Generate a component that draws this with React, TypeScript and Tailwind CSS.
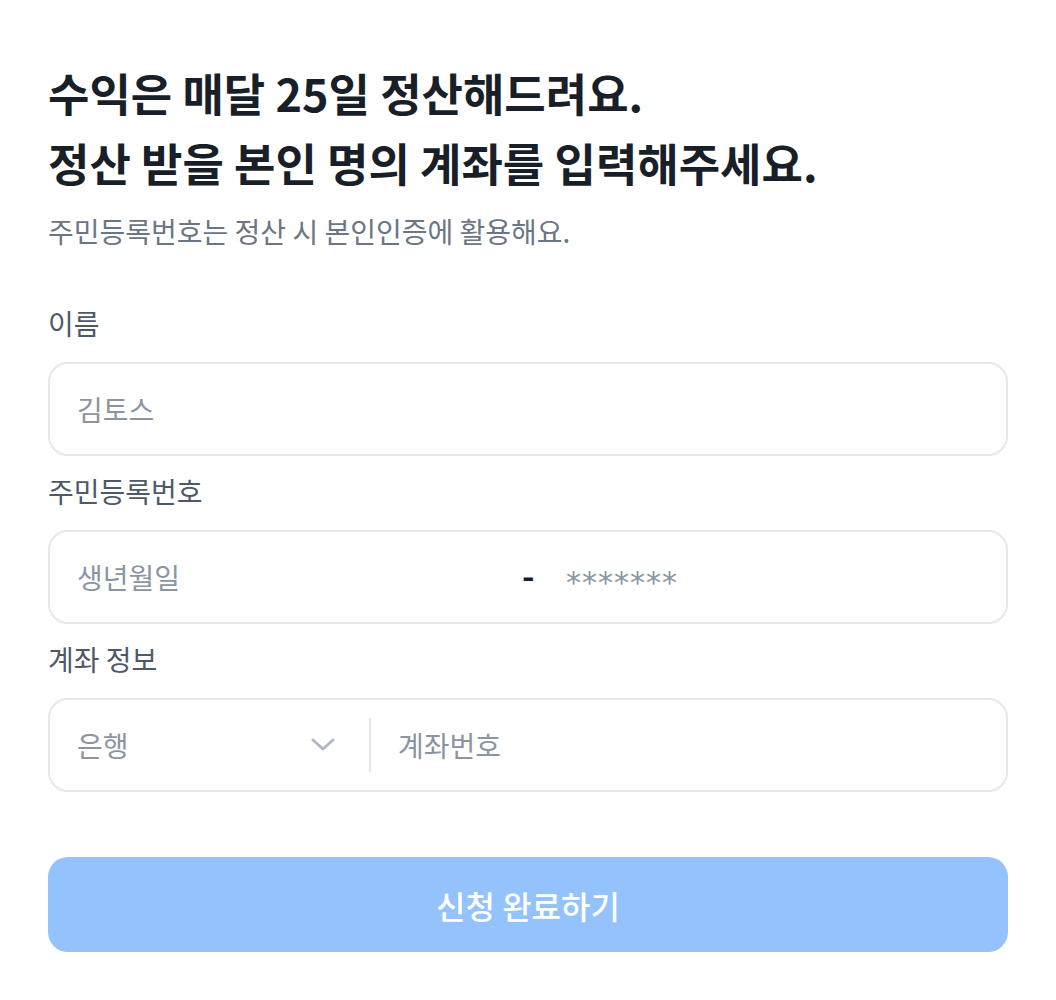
import { useState } from "react";

const font = { fontFamily: '"Noto Sans CJK KR", "Noto Sans", sans-serif' };

function Label({ children }: { children: React.ReactNode }) {
  return <div className="text-[28px] leading-[36px] text-[#4e5968] mb-[21px]">{children}</div>;
}

export default function App() {
  const [name, setName] = useState("");
  const [birth, setBirth] = useState("");
  const [rest, setRest] = useState("");
  const [account, setAccount] = useState("");

  return (
    <div className="min-h-screen bg-white" style={font}>
      <div className="px-[48px] pt-[58px] pb-[48px]">
        <h1 className="text-[45px] leading-[70px] font-semibold text-[#191f28]">
          수익은 매달 25일 정산해드려요.
          <br />
          정산 받을 본인 명의 계좌를 입력해주세요.
        </h1>
        <p className="mt-[15px] text-[28px] leading-[36px] text-[#6b7684]">
          주민등록번호는 정산 시 본인인증에 활용해요.
        </p>

        <div className="mt-[56px]">
          <Label>이름</Label>
          <div className="h-[94px] rounded-[20px] border-2 border-[#e5e8eb] flex items-center px-[27px]">
            <input
              value={name}
              onChange={(e) => setName(e.target.value)}
              placeholder="김토스"
              className="w-full bg-transparent outline-none text-[28px] text-[#191f28] placeholder:text-[#8b95a1]"
            />
          </div>
        </div>

        <div className="mt-[17px]">
          <Label>주민등록번호</Label>
          <div className="h-[94px] rounded-[20px] border-2 border-[#e5e8eb] flex items-center pl-[27px] pr-[27px]">
            <input
              value={birth}
              onChange={(e) => setBirth(e.target.value)}
              placeholder="생년월일"
              className="w-[445px] bg-transparent outline-none text-[28px] text-[#191f28] placeholder:text-[#8b95a1]"
            />
            <span className="text-[34px] font-bold text-[#191f28] leading-none w-[14px] -mt-[4px]">-</span>
            <input
              value={rest}
              onChange={(e) => setRest(e.target.value)}
              placeholder="*******"
              style={{ fontFamily: '"DejaVu Sans", sans-serif' }}
              className="ml-[30px] flex-1 bg-transparent outline-none text-[30px] pt-[10px] tracking-[1px] text-[#191f28] placeholder:text-[#8b95a1]"
            />
          </div>
        </div>

        <div className="mt-[17px]">
          <Label>계좌 정보</Label>
          <div className="h-[94px] rounded-[20px] border-2 border-[#e5e8eb] flex items-center">
            <button className="w-[319px] h-full flex items-center justify-between pl-[27px] pr-[34px] text-[28px] text-[#8b95a1]">
              <span>은행</span>
              <svg width="24" height="14" viewBox="0 0 24 14" fill="none">
                <path d="M2 2 L12 11 L22 2" stroke="#b0b8c1" strokeWidth="3" strokeLinecap="round" strokeLinejoin="round" />
              </svg>
            </button>
            <div className="w-[2px] h-[54px] bg-[#e5e8eb]" />
            <input
              value={account}
              onChange={(e) => setAccount(e.target.value)}
              placeholder="계좌번호"
              className="flex-1 pl-[27px] pr-[27px] bg-transparent outline-none text-[28px] text-[#191f28] placeholder:text-[#8b95a1]"
            />
          </div>
        </div>

        <button className="mt-[65px] w-full h-[95px] rounded-[20px] bg-[#93c2fd] text-white text-[32px] font-medium">
          신청 완료하기
        </button>
      </div>
    </div>
  );
}
